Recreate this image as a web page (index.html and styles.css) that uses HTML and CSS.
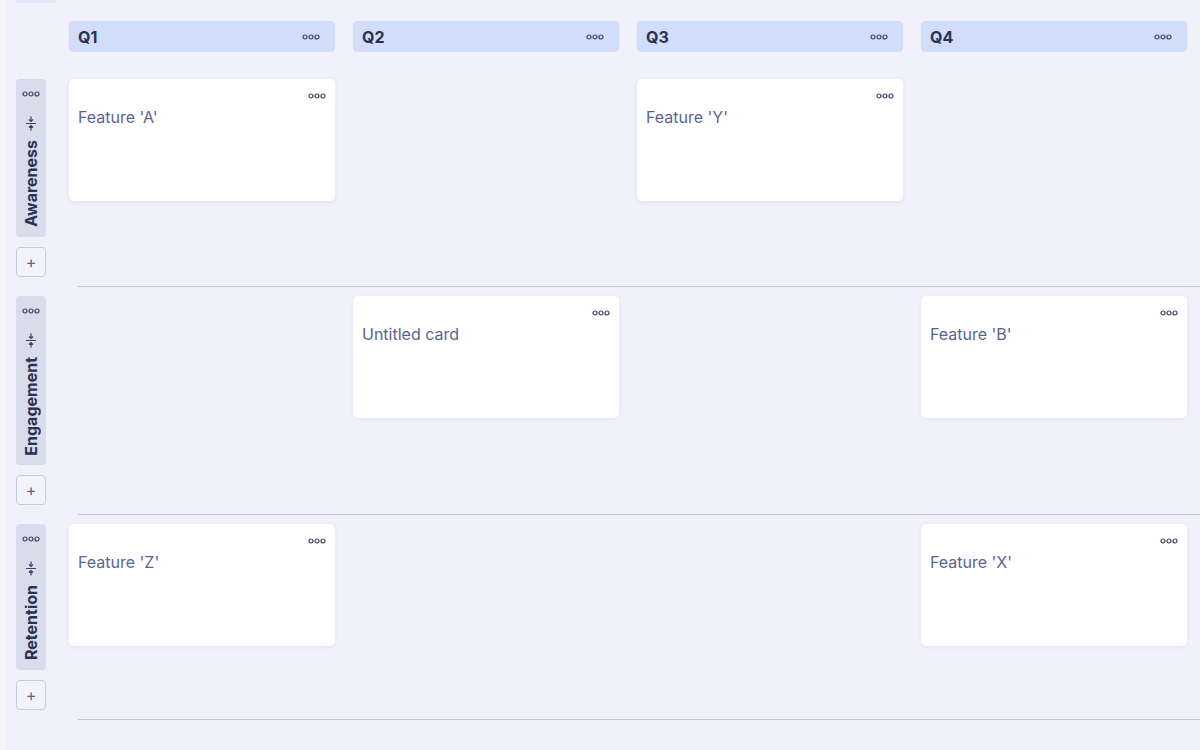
FILE: index.html
```html
<!DOCTYPE html>
<html lang="en">
<head>
    <meta charset="UTF-8">
    <meta name="viewport" content="width=device-width, initial-scale=1.0">
    <title>Roadmap</title>
    <link rel="stylesheet" href="styles.css">
</head>
<body>
    <div class="board">
        <div class="top-tab"></div>

        <div class="header-row">
            <div></div>
            <div class="col-head"><span>Q1</span><svg class="dots" width="18" height="6" viewBox="0 0 18 6"><circle cx="3" cy="3" r="2"/><circle cx="9" cy="3" r="2"/><circle cx="15" cy="3" r="2"/></svg></div>
            <div class="col-head"><span>Q2</span><svg class="dots" width="18" height="6" viewBox="0 0 18 6"><circle cx="3" cy="3" r="2"/><circle cx="9" cy="3" r="2"/><circle cx="15" cy="3" r="2"/></svg></div>
            <div class="col-head"><span>Q3</span><svg class="dots" width="18" height="6" viewBox="0 0 18 6"><circle cx="3" cy="3" r="2"/><circle cx="9" cy="3" r="2"/><circle cx="15" cy="3" r="2"/></svg></div>
            <div class="col-head"><span>Q4</span><svg class="dots" width="18" height="6" viewBox="0 0 18 6"><circle cx="3" cy="3" r="2"/><circle cx="9" cy="3" r="2"/><circle cx="15" cy="3" r="2"/></svg></div>
        </div>

        <!-- Awareness -->
        <div class="lane">
            <div class="lane-side">
                <div class="lane-label">
                    <svg class="dots" width="18" height="6" viewBox="0 0 18 6"><circle cx="3" cy="3" r="2"/><circle cx="9" cy="3" r="2"/><circle cx="15" cy="3" r="2"/></svg>
                    <svg class="collapse" width="12" height="15" viewBox="0 0 12 15"><path d="M1 7.5h10M6 0.5v5M4 3.5l2 2 2-2M6 14.5v-5M4 11.5l2-2 2 2"/></svg>
                    <span class="lane-name">Awareness</span>
                </div>
                <button class="add-btn">+</button>
            </div>
            <div class="cell"><div class="card"><svg class="dots" width="18" height="6" viewBox="0 0 18 6"><circle cx="3" cy="3" r="2"/><circle cx="9" cy="3" r="2"/><circle cx="15" cy="3" r="2"/></svg><p>Feature 'A'</p></div></div>
            <div class="cell"></div>
            <div class="cell"><div class="card"><svg class="dots" width="18" height="6" viewBox="0 0 18 6"><circle cx="3" cy="3" r="2"/><circle cx="9" cy="3" r="2"/><circle cx="15" cy="3" r="2"/></svg><p>Feature 'Y'</p></div></div>
            <div class="cell"></div>
        </div>
        <div class="divider"></div>

        <!-- Engagement -->
        <div class="lane">
            <div class="lane-side">
                <div class="lane-label">
                    <svg class="dots" width="18" height="6" viewBox="0 0 18 6"><circle cx="3" cy="3" r="2"/><circle cx="9" cy="3" r="2"/><circle cx="15" cy="3" r="2"/></svg>
                    <svg class="collapse" width="12" height="15" viewBox="0 0 12 15"><path d="M1 7.5h10M6 0.5v5M4 3.5l2 2 2-2M6 14.5v-5M4 11.5l2-2 2 2"/></svg>
                    <span class="lane-name">Engagement</span>
                </div>
                <button class="add-btn">+</button>
            </div>
            <div class="cell"></div>
            <div class="cell"><div class="card"><svg class="dots" width="18" height="6" viewBox="0 0 18 6"><circle cx="3" cy="3" r="2"/><circle cx="9" cy="3" r="2"/><circle cx="15" cy="3" r="2"/></svg><p>Untitled card</p></div></div>
            <div class="cell"></div>
            <div class="cell"><div class="card"><svg class="dots" width="18" height="6" viewBox="0 0 18 6"><circle cx="3" cy="3" r="2"/><circle cx="9" cy="3" r="2"/><circle cx="15" cy="3" r="2"/></svg><p>Feature 'B'</p></div></div>
        </div>
        <div class="divider"></div>

        <!-- Retention -->
        <div class="lane">
            <div class="lane-side">
                <div class="lane-label">
                    <svg class="dots" width="18" height="6" viewBox="0 0 18 6"><circle cx="3" cy="3" r="2"/><circle cx="9" cy="3" r="2"/><circle cx="15" cy="3" r="2"/></svg>
                    <svg class="collapse" width="12" height="15" viewBox="0 0 12 15"><path d="M1 7.5h10M6 0.5v5M4 3.5l2 2 2-2M6 14.5v-5M4 11.5l2-2 2 2"/></svg>
                    <span class="lane-name">Retention</span>
                </div>
                <button class="add-btn">+</button>
            </div>
            <div class="cell"><div class="card"><svg class="dots" width="18" height="6" viewBox="0 0 18 6"><circle cx="3" cy="3" r="2"/><circle cx="9" cy="3" r="2"/><circle cx="15" cy="3" r="2"/></svg><p>Feature 'Z'</p></div></div>
            <div class="cell"></div>
            <div class="cell"></div>
            <div class="cell"><div class="card"><svg class="dots" width="18" height="6" viewBox="0 0 18 6"><circle cx="3" cy="3" r="2"/><circle cx="9" cy="3" r="2"/><circle cx="15" cy="3" r="2"/></svg><p>Feature 'X'</p></div></div>
        </div>
        <div class="divider"></div>
    </div>
</body>
</html>
```

FILE: styles.css
```css
body {
    margin: 0;
    font-family: Inter, "Noto Sans", sans-serif;
    background-color: #f0f1fa;
    color: #2b3152;
    overflow: hidden;
}
.board {
    min-height: 750px;
    border-left: 5px solid #f4f4f9;
    padding-left: 11px;
}
.top-tab {
    width: 40px;
    height: 3px;
    background-color: #e3e8f8;
    border-radius: 0 0 4px 4px;
}
.header-row,
.lane {
    display: grid;
    grid-template-columns: 35px repeat(4, 266px);
    column-gap: 18px;
}
.header-row {
    margin-top: 18px;
    margin-bottom: 27px;
}
.col-head {
    height: 31px;
    background-color: #d2ddfa;
    border-radius: 4px;
    display: flex;
    align-items: center;
    justify-content: space-between;
    padding: 0 15px 0 9px;
    font-size: 16px;
    font-weight: 700;
}
.dots {
    fill: none;
    stroke: #3a4166;
    stroke-width: 1.2;
}
.lane-side {
    display: flex;
    flex-direction: column;
    align-items: flex-start;
    padding-bottom: 9px;
}
.lane-label {
    width: 30px;
    background-color: #d9dcea;
    border-radius: 4px;
    display: flex;
    flex-direction: column;
    align-items: center;
    padding: 12px 0 10px;
    box-sizing: border-box;
}
.collapse {
    margin-top: 19px;
    fill: none;
    stroke: #3a4166;
    stroke-width: 1.2;
}
.lane-name {
    margin-top: 9px;
    writing-mode: vertical-rl;
    transform: rotate(180deg);
    font-size: 16px;
    font-weight: 700;
    line-height: 18px;
}
.add-btn {
    margin-top: 10px;
    width: 30px;
    height: 30px;
    padding: 0;
    border: 1px solid #c6cbe4;
    border-radius: 4px;
    background-color: #f3f4fb;
    color: #5d6486;
    font-family: inherit;
    font-size: 16px;
    line-height: 26px;
}
.card {
    height: 122px;
    background-color: #fff;
    border-radius: 5px;
    box-shadow: 0 1px 4px rgba(60, 70, 140, 0.08);
    position: relative;
    padding: 28px 9px 0;
    box-sizing: border-box;
}
.card .dots {
    position: absolute;
    top: 14px;
    right: 9px;
}
.card p {
    margin: 0;
    font-size: 16px;
    color: #5b6491;
}
.divider {
    height: 1px;
    background-color: #c3c7dd;
    margin: 0 0 9px 62px;
}
```
